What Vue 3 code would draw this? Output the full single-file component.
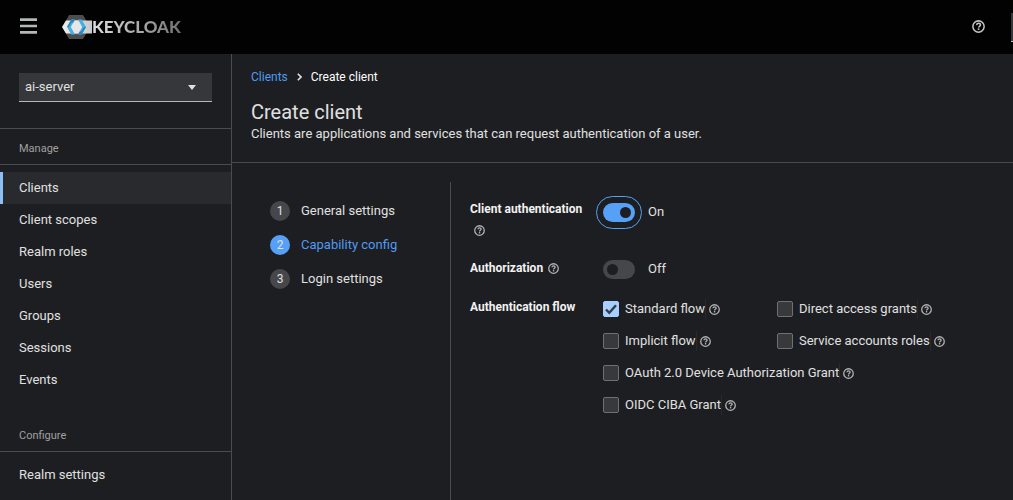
<script setup>
import { ref, h } from 'vue'

const HelpIcon = () =>
  h('svg', { class: 'help-glyph', viewBox: '0 0 12 12', 'aria-hidden': 'true' }, [
    h('circle', { cx: 6, cy: 6, r: 5.2, fill: 'none', stroke: 'currentColor', 'stroke-width': 1.4 }),
    h('path', {
      d: 'M4.3 4.7C4.4 3.7 5.1 3.1 6 3.1c1 0 1.8.6 1.8 1.5 0 1.2-1.7 1.2-1.7 2.4',
      fill: 'none',
      stroke: 'currentColor',
      'stroke-width': 1.4,
    }),
    h('rect', { x: 5.3, y: 7.7, width: 1.5, height: 1.5, fill: 'currentColor' }),
  ])

const realm = ref('ai-server')
const manage = ['Clients', 'Client scopes', 'Realm roles', 'Users', 'Groups', 'Sessions', 'Events']
const configure = ['Realm settings']
const steps = ['General settings', 'Capability config', 'Login settings']
const clientAuth = ref(true)
const authorization = ref(false)
const flows = ref([
  { id: 'standard', label: 'Standard flow', on: true },
  { id: 'direct', label: 'Direct access grants', on: false },
  { id: 'implicit', label: 'Implicit flow', on: false },
  { id: 'service', label: 'Service accounts roles', on: false },
  { id: 'device', label: 'OAuth 2.0 Device Authorization Grant', on: false, wide: true },
  { id: 'ciba', label: 'OIDC CIBA Grant', on: false, wide: true },
])
</script>

<template>
  <div class="page">
    <header class="masthead">
      <button class="menu" type="button" aria-label="Global navigation">
        <svg viewBox="0 0 17 16" width="17" height="16" aria-hidden="true">
          <path d="M0 1.700h17M0 8h17M0 14.300h17" stroke="#b4b8b8" stroke-width="2.700" />
        </svg>
      </button>
      <a class="brand" href="#" aria-label="Keycloak">
        <svg viewBox="0 0 30 26" width="30" height="26" aria-hidden="true">
          <defs>
            <linearGradient id="band" x1="0" x2="1">
              <stop offset="0" stop-color="#efefef" />
              <stop offset="1" stop-color="#c9c9c9" />
            </linearGradient>
          </defs>
          <path d="M7 1h14l7 12-7 12H7L0.500 13z" fill="#4d4d4d" />
          <path d="M4 6.500h26v13H4L0 13z" fill="url(#band)" />
          <path d="M10.500 6.500h8L22 13l-3.500 6.500h-8L7 13z" fill="#e6e6e6" />
          <path d="M9.300 5.500h3.700L8.800 13l4.200 7.500H9.300L5 13z" fill="#45afe2" />
          <path d="M9.300 5.500h3.700l-1.700 3H9.500L6.800 13H5z" fill="#2f83bd" />
          <path d="M16 5.500h3.700L24 13l-4.300 7.500H16l4.200-7.500z" fill="#45afe2" />
          <path d="M24 13l-4.300 7.500H16l1.700-3h1.600l2.700-4.500z" fill="#2f83bd" />
        </svg>
        <span class="wordmark">KEYCLOAK</span>
      </a>
      <button class="mast-help" type="button" aria-label="Help"><HelpIcon /></button>
      <button class="account" type="button" aria-label="Account"></button>
    </header>

    <div class="body">
      <aside class="sidebar">
        <div class="realm">
          <select v-model="realm" aria-label="Realm">
            <option>ai-server</option>
          </select>
          <svg class="caret" viewBox="0 0 8 5" width="8" height="5" aria-hidden="true">
            <path d="M0 0h8L4 5z" fill="#e0e0e0" />
          </svg>
        </div>
        <nav aria-label="Manage">
          <h2 class="group first">Manage</h2>
          <a v-for="(n, i) in manage" :key="n" href="#" class="nav-item" :class="{ active: i === 0 }">{{ n }}</a>
        </nav>
        <nav aria-label="Configure">
          <h2 class="group second">Configure</h2>
          <a v-for="n in configure" :key="n" href="#" class="nav-item">{{ n }}</a>
        </nav>
      </aside>

      <main class="main">
        <section class="intro">
          <nav class="crumbs" aria-label="Breadcrumb">
            <a href="#">Clients</a>
            <svg viewBox="0 0 5 8" width="5" height="8" aria-hidden="true">
              <path d="M0.800 0.800L4 4 0.800 7.200" fill="none" stroke="#e0e0e0" stroke-width="1.600" />
            </svg>
            <span>Create client</span>
          </nav>
          <h1>Create client</h1>
          <p>Clients are applications and services that can request authentication of a user.</p>
        </section>

        <div class="wizard">
          <ol class="steps">
            <li v-for="(s, i) in steps" :key="s">
              <button type="button" class="step" :class="{ current: i === 1 }">
                <span class="num">{{ i + 1 }}</span>{{ s }}
              </button>
            </li>
          </ol>

          <form class="form" @submit.prevent>
            <div class="row auth">
              <div class="row-label">
                <label for="client-auth">Client authentication</label>
                <button class="help below" type="button" aria-label="About client authentication"><HelpIcon /></button>
              </div>
              <label class="switch">
                <input id="client-auth" v-model="clientAuth" class="focused" type="checkbox" role="switch" />
                <span>{{ clientAuth ? 'On' : 'Off' }}</span>
              </label>
            </div>
            <div class="row authz">
              <div class="row-label">
                <label for="authorization">Authorization</label>
                <button class="help" type="button" aria-label="About authorization"><HelpIcon /></button>
              </div>
              <label class="switch">
                <input id="authorization" v-model="authorization" type="checkbox" role="switch" />
                <span>{{ authorization ? 'On' : 'Off' }}</span>
              </label>
            </div>
            <div class="row" role="group" aria-labelledby="flow-title">
              <div id="flow-title" class="row-label">Authentication flow</div>
              <div class="flows">
                <div v-for="f in flows" :key="f.id" class="flow" :class="{ wide: f.wide }">
                  <span class="box">
                    <input :id="f.id" v-model="f.on" type="checkbox" />
                    <svg v-if="f.on" viewBox="0 0 16 16" aria-hidden="true">
                      <path d="M3 8.500l3.300 3.300L13 4.300" fill="none" stroke="#333d48" stroke-width="2.400" />
                    </svg>
                  </span>
                  <label :for="f.id">{{ f.label }}</label>
                  <button class="help" type="button" :aria-label="'About ' + f.label"><HelpIcon /></button>
                </div>
              </div>
            </div>
          </form>
        </div>
      </main>
    </div>
  </div>
</template>

<style>
body {
  margin: 0;
  background: #1d1e21;
}
.help-glyph {
  display: block;
  width: 100%;
  height: 100%;
}
</style>

<style scoped>
.page {
  min-height: 100vh;
  display: flex;
  flex-direction: column;
  overflow: hidden;
  box-sizing: border-box;
  background: #1d1e21;
  color: #e0e0e0;
  font: 13px/20px Roboto, "Liberation Sans", sans-serif;
}
button {
  padding: 0;
  border: 0;
  background: none;
  color: inherit;
  font: inherit;
}
a {
  color: inherit;
  text-decoration: none;
}
.masthead {
  display: flex;
  align-items: center;
  height: 54px;
  padding-left: 20px;
  background: #020202;
}
.menu {
  display: flex;
  margin-bottom: 2px;
}
.brand {
  display: flex;
  align-items: center;
  margin-left: 25px;
}
.wordmark {
  font: 900 17px/20px Lato, sans-serif;
  background: linear-gradient(90deg, #dedede, #a8a8a8 55%, #707070);
  background-clip: text;
  color: transparent;
}
.mast-help {
  width: 13px;
  height: 13px;
  margin: 0 26px 2px auto;
  color: #c4c4c4;
}
.account {
  flex: none;
  width: 120px;
  height: 29px;
  margin-right: -118px;
  background: #36373a;
  border-bottom: 1px solid #c0c0c0;
}
.body {
  flex: 1;
  display: flex;
}
.sidebar {
  flex: none;
  width: 231px;
  border-right: 1px solid #4a4b4e;
}
.realm {
  position: relative;
  margin: 19px 19px 26px;
}
.realm select {
  display: block;
  width: 100%;
  height: 29px;
  padding: 0 6px;
  appearance: none;
  border: 0;
  border-bottom: 1px solid #b8b8b8;
  border-radius: 0;
  background: #36373a;
  color: #e0e0e0;
  font: inherit;
}
.caret {
  position: absolute;
  right: 16px;
  top: 12px;
  pointer-events: none;
}
.group {
  margin: 0 0 7px;
  padding: 10px 19px 5px;
  border-bottom: 1px solid #4a4b4e;
  color: #a0a0a0;
  font-size: 11px;
  font-weight: 400;
}
.group.first {
  border-top: 1px solid #4a4b4e;
}
.group.second {
  padding-top: 30px;
}
.nav-item {
  display: block;
  padding: 6px 19px;
}
.nav-item.active {
  background: #292a2d;
  box-shadow: inset 3px 0 #8cc0f5;
}
.main {
  flex: 1;
  min-width: 0;
  display: flex;
  flex-direction: column;
}
.intro {
  padding: 13px 19px 18px;
  border-bottom: 1px solid #4a4b4e;
}
.crumbs {
  display: flex;
  align-items: center;
  gap: 9px;
  font-size: 12px;
  color: #fff;
}
.crumbs a {
  color: #4f9bf3;
}
h1 {
  margin: 13px 0 0;
  font-size: 20px;
  font-weight: 400;
  line-height: 24px;
}
.intro p {
  margin: 0;
}
.wizard {
  flex: 1;
  display: flex;
  padding-top: 19px;
}
.steps {
  flex: none;
  width: 219px;
  box-sizing: border-box;
  margin: 0;
  padding: 19px 0 0 38px;
  border-right: 1px solid #4a4b4e;
  list-style: none;
}
.steps li {
  margin-bottom: 14px;
}
.step {
  display: flex;
  align-items: center;
  gap: 11px;
}
.step.current {
  color: #4f9bf3;
}
.num {
  width: 20px;
  height: 20px;
  border-radius: 50%;
  background: #46474a;
  color: #e0e0e0;
  font-size: 12px;
  text-align: center;
}
.current .num {
  background: #56a0f7;
}
.form {
  flex: 1;
  padding: 17px 20px 0 19px;
}
.row {
  display: grid;
  grid-template-columns: 117px 1fr;
  column-gap: 16px;
}
.row.auth {
  margin-bottom: 17px;
}
.row.authz {
  margin-bottom: 17px;
}
.row-label {
  color: #f2f2f2;
  font-size: 12px;
  font-weight: 700;
}
.row-label label {
  white-space: nowrap;
}
.help {
  display: inline-block;
  width: 11px;
  height: 11px;
  color: #b4b4b4;
  vertical-align: -2px;
}
.row-label .help {
  margin-left: 5px;
}
.row-label .help.below {
  display: block;
  margin: 6px 0 5px 4px;
}
.switch {
  display: flex;
  align-items: center;
  gap: 13px;
  height: 26px;
}
.authz .switch {
  height: 22px;
}
.switch input {
  appearance: none;
  display: flex;
  align-items: center;
  box-sizing: border-box;
  width: 32px;
  height: 19px;
  margin: 0;
  padding: 0 4px;
  border-radius: 10px;
  background: #46474a;
}
.switch input::before {
  content: "";
  width: 11px;
  height: 11px;
  border-radius: 50%;
  background: #1d1e21;
}
.switch input:checked {
  justify-content: flex-end;
  background: #56a0f7;
}
.switch input.focused {
  outline: 1px solid #56a0f7;
  outline-offset: 6px;
}
.flows {
  display: grid;
  grid-template-columns: 174px 1fr;
  row-gap: 12px;
  padding-top: 2px;
}
.flow {
  display: flex;
  align-items: center;
}
.flow.wide {
  grid-column: 1 / -1;
}
.flow label {
  margin: 0 3px 0 6px;
  border-right: 1px solid #28292c;
  white-space: nowrap;
}
.box {
  display: grid;
}
.box > * {
  grid-area: 1 / 1;
  box-sizing: border-box;
  width: 16px;
  height: 16px;
  margin: 0;
}
.box svg {
  pointer-events: none;
}
.box input {
  appearance: none;
  border: 1px solid #707072;
  border-radius: 2px;
  background: #38393b;
}
.box input:checked {
  border-color: #a6ceff;
  background: #a6ceff;
}
</style>
